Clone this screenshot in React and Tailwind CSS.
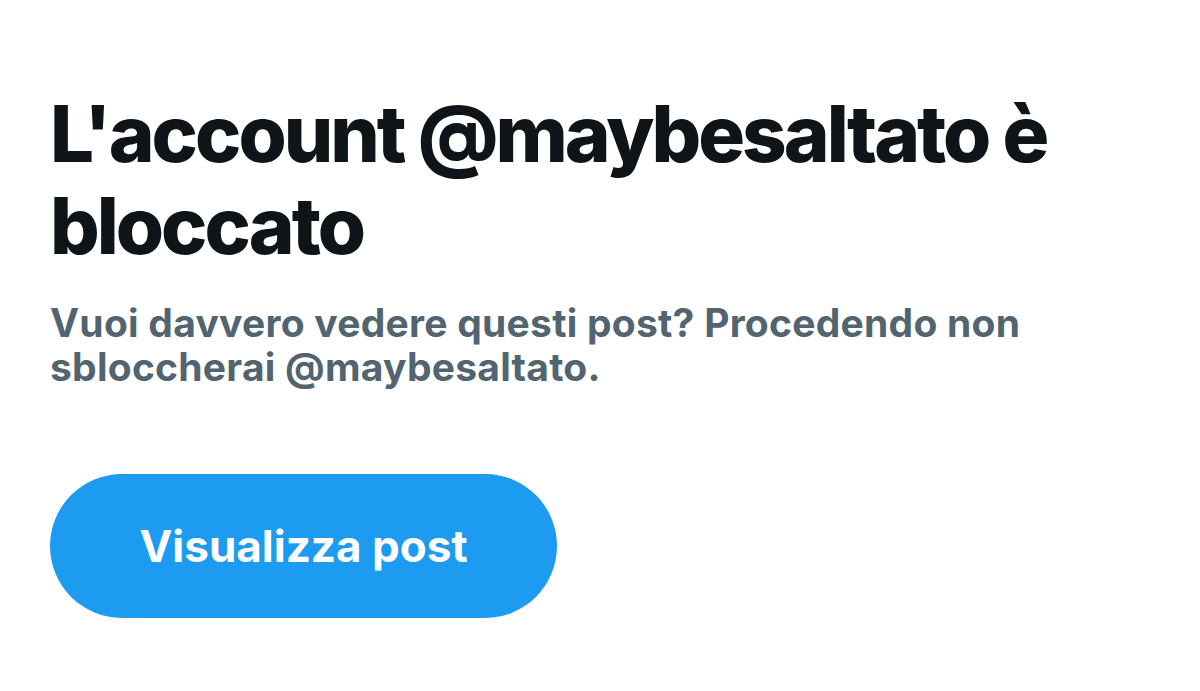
export default function App() {
  return (
    <div className="w-[1200px] h-[691px] bg-white overflow-hidden" style={{ fontFamily: "Inter, 'Noto Sans', sans-serif" }}>
      <div className="pl-[50px] pr-[40px] pt-[88px]">
        <h1 className="text-[78px] leading-[92px] font-extrabold text-[#0f1419] tracking-[-3px]">
          L'account @maybesaltato è bloccato
        </h1>
        <p className="mt-[29px] text-[39px] leading-[44px] font-bold text-[#536471] tracking-[0.25px] w-[1000px]">
          Vuoi davvero vedere questi post? Procedendo non sbloccherai @maybesaltato.
        </p>
        <button className="mt-[85px] w-[507px] h-[144px] rounded-full bg-[#1d9bf0] text-white text-[44px] font-bold flex items-center justify-center">
          Visualizza post
        </button>
      </div>
    </div>
  );
}
